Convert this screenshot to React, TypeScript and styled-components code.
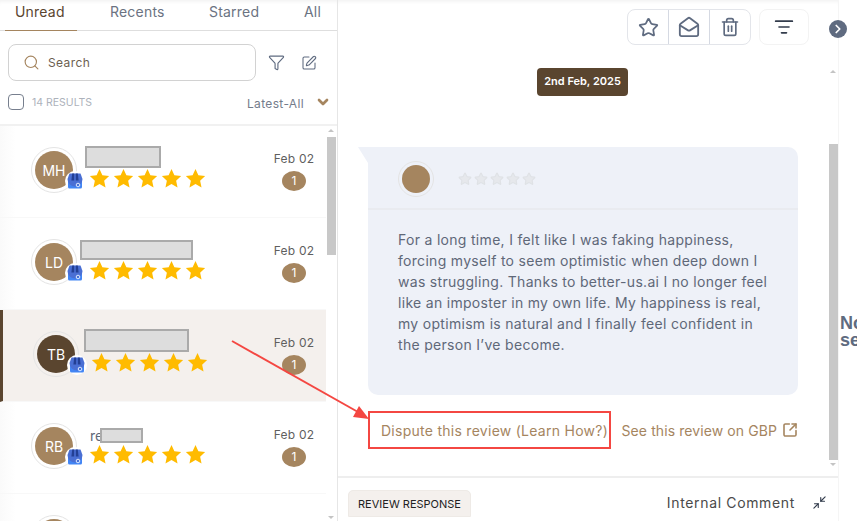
import React from "react";
import styled, { createGlobalStyle } from "styled-components";
import {
  ChevronDown,
  ChevronRight,
  Filter,
  ListFilter,
  MailOpen,
  Minimize2,
  Search,
  SquareArrowOutUpRight,
  SquarePen,
  Star,
  Trash2,
} from "lucide-react";

const palette = {
  brown: "#a5855f",
  dark: "#5a452f",
  text: "#5f6878",
  gray: "#5f6b80",
  line: "#e6e6e6",
  selected: "#f4f0ed",
  card: "#eef1f8",
  scroll: "#c8c8c8",
  red: "#f44742",
};

const GlobalStyle = createGlobalStyle`
  html, body {
    margin: 0;
    padding: 0;
    background: white;
  }
  * {
    box-sizing: border-box;
  }
`;

const Page = styled.div`
  position: relative;
  display: flex;
  width: 857px;
  height: 521px;
  overflow: hidden;
  background: white;
  color: ${palette.text};
  font-family: Inter, "Open Sans", sans-serif;
`;

const Sidebar = styled.aside`
  display: flex;
  flex-direction: column;
  flex: 0 0 338px;
  height: 521px;
  border-right: 1px solid ${palette.line};
`;

const Tabs = styled.nav`
  display: grid;
  grid-template-columns: 95px 99px 95px auto;
  height: 31px;
  padding-left: 5px;
  border-bottom: 1px solid #dedede;
  box-shadow: inset 0 4px 4px -3px #eeeeee;
`;

const Tab = styled.div<{ $active?: boolean }>`
  justify-self: start;
  width: ${(p) => (p.$active ? "72px" : "auto")};
  height: 31px;
  padding: 3px 0 0 10px;
  font-size: 14px;
  line-height: 18px;
  letter-spacing: 0.2px;
  color: ${(p) => (p.$active ? palette.dark : "#6b7382")};
  border-bottom: 1px solid ${(p) => (p.$active ? palette.brown : "transparent")};
`;

const SearchRow = styled.div`
  display: flex;
  align-items: center;
  height: 37px;
  margin: 13px 0 0 8px;
`;

const SearchBox = styled.div`
  display: flex;
  align-items: center;
  gap: 8px;
  width: 248px;
  height: 37px;
  padding-left: 14px;
  border: 1px solid #d2d2d2;
  border-radius: 8px;
  font-size: 12px;
  letter-spacing: 0.4px;
  color: #6c5f50;
`;

const ToolIcon = styled.span<{ $left: number }>`
  display: flex;
  margin-left: ${(p) => p.$left}px;
  color: ${palette.gray};
`;

const ResultsRow = styled.div`
  display: flex;
  align-items: center;
  height: 16px;
  margin: 13px 0 0 8px;
`;

const Checkbox = styled.span`
  flex: none;
  width: 16px;
  height: 16px;
  border: 1px solid #777f8e;
  border-radius: 4px;
`;

const ResultCount = styled.span`
  margin-left: 8px;
  font-size: 10.5px;
  color: #adb2bb;
`;

const SortLabel = styled.span`
  margin-left: auto;
  padding-top: 3px;
  font-size: 12px;
  letter-spacing: 0.35px;
  color: #747c8b;
`;

const SortChevron = styled.span`
  display: flex;
  margin: 0 6px 0 11px;
  color: ${palette.brown};
`;

const ListArea = styled.div`
  display: flex;
  flex: 1;
  min-height: 0;
  margin-top: 14px;
  border-top: 2px solid #f1f1f1;
  overflow: hidden;
`;

const List = styled.div`
  flex: 0 0 326px;
`;

const Row = styled.div<{ $selected?: boolean }>`
  display: flex;
  align-items: flex-start;
  height: 92px;
  padding: 21px 0 0 ${(p) => (p.$selected ? 30 : 31)}px;
  background: ${(p) =>
    p.$selected ? palette.selected : "linear-gradient(90deg, #fafafa, white 16px)"};
  border-left: ${(p) => (p.$selected ? `3px solid ${palette.dark}` : "0 none")};
  border-bottom: 1px solid #f8f8f8;
`;

const AvatarWrap = styled.div`
  position: relative;
  flex: none;
  width: 46px;
  height: 46px;
`;

const Avatar = styled.div<{ $bg?: string; $size?: number }>`
  display: flex;
  align-items: center;
  justify-content: center;
  flex: none;
  width: ${(p) => p.$size ?? 46}px;
  height: ${(p) => p.$size ?? 46}px;
  padding: 3px;
  border: 1px solid #e4e4e4;
  border-radius: 50%;
  background: ${(p) => p.$bg ?? palette.brown} content-box;
  font-size: 14px;
  color: white;
`;

const Badge = styled.span`
  position: absolute;
  right: -8px;
  bottom: 2px;
  display: flex;
  align-items: center;
  justify-content: center;
  width: 20px;
  height: 20px;
  border-radius: 50%;
  background: white;
`;

const NameColumn = styled.div<{ $top: number }>`
  display: flex;
  flex-direction: column;
  margin: ${(p) => p.$top}px 0 0 13px;
`;

const NameLine = styled.div`
  display: flex;
  align-items: center;
  font-size: 14px;
  color: ${palette.text};
`;

const Redaction = styled.span<{ $width: number; $height: number; $shift: number }>`
  display: block;
  width: ${(p) => p.$width}px;
  height: ${(p) => p.$height}px;
  margin-left: ${(p) => p.$shift}px;
  background: #dddddd;
  border: 2px solid #aaaaaa;
`;

const Stars = styled.div`
  display: flex;
  gap: 3px;
  margin-left: -1px;
`;

const DateColumn = styled.div`
  display: flex;
  flex-direction: column;
  align-items: center;
  width: 42px;
  margin: 2px 11px 0 auto;
  font-size: 12px;
  line-height: 20px;
  letter-spacing: 0.2px;
  color: #5f5f5f;
`;

const Count = styled.span`
  width: 24px;
  height: 20px;
  margin-top: 2px;
  border-radius: 50%;
  background: ${palette.brown};
  text-align: center;
  font-size: 12px;
  color: white;
`;

const Track = styled.div<{ $thumbTop: number; $thumbHeight: number }>`
  position: relative;
  flex: 0 0 10px;
  display: flex;
  flex-direction: column;
  margin-left: 1px;
  padding-top: ${(p) => p.$thumbTop}px;
  &::before {
    content: "";
    display: block;
    width: 9px;
    height: ${(p) => p.$thumbHeight}px;
    background: ${palette.scroll};
  }
`;

const ScrollArrow = styled.span<{ $top: number; $down?: boolean }>`
  position: absolute;
  left: 1px;
  top: ${(p) => p.$top}px;
  border-left: 3px solid transparent;
  border-right: 3px solid transparent;
  ${(p) =>
    p.$down ? "border-top: 3px solid #c4c4c4;" : "border-bottom: 3px solid #c4c4c4;"}
`;

const Main = styled.main`
  display: flex;
  flex-direction: column;
  flex: 0 0 500px;
  height: 521px;
`;

const Toolbar = styled.div`
  display: flex;
  justify-content: flex-end;
  gap: 8px;
  height: 58px;
  padding: 9px 29px 0 0;
  box-shadow: inset 0 4px 4px -3px #eeeeee;
`;

const ButtonGroup = styled.div`
  display: flex;
  width: 124px;
  height: 36px;
  border: 1px solid #e3e5ea;
  border-radius: 8px;
`;

const ToolButton = styled.button<{ $last?: boolean }>`
  display: flex;
  align-items: center;
  justify-content: center;
  flex: 1;
  padding: 0;
  border: 0;
  border-right: ${(p) => (p.$last ? "0 none" : "1px solid #d5d9e2")};
  background: transparent;
  color: ${palette.gray};
`;

const SortButton = styled(ToolButton)`
  flex: none;
  width: 50px;
  height: 36px;
  border: 1px solid #f3f3f3;
  border-radius: 8px;
  color: #333c4c;
`;

const MainBody = styled.div`
  display: flex;
  height: 418px;
`;

const Thread = styled.div`
  flex: 0 0 491px;
  display: flex;
  flex-direction: column;
`;

const DatePill = styled.div`
  align-self: flex-start;
  width: 91px;
  height: 28px;
  margin: 10px 0 0 199px;
  border-radius: 4px;
  background: ${palette.dark};
  text-align: center;
  font-size: 11px;
  font-weight: 600;
  line-height: 27px;
  color: white;
`;

const Card = styled.section`
  position: relative;
  width: 430px;
  height: 248px;
  margin: 51px 0 0 30px;
  border-radius: 0 10px 10px 10px;
  background: ${palette.card};
  &::before {
    content: "";
    position: absolute;
    left: -10px;
    top: 0;
    width: 10px;
    height: 16px;
    background: ${palette.card};
    clip-path: polygon(0 0, 100% 0, 100% 100%);
  }
`;

const CardHeader = styled.header`
  display: flex;
  align-items: center;
  height: 63px;
  padding: 2px 0 0 30px;
  border-bottom: 2px solid #e9ebf0;
`;

const GhostStars = styled.div`
  display: flex;
  gap: 2px;
  margin-left: 24px;
`;

const ReviewText = styled.p`
  margin: 0;
  padding: 19px 0 0 30px;
  font-size: 14px;
  line-height: 21px;
  letter-spacing: 0.3px;
  white-space: nowrap;
  color: ${palette.text};
`;

const LinksRow = styled.div`
  display: flex;
  align-items: center;
  margin: 16px 0 0 30px;
  width: 430px;
  color: ${palette.brown};
  font-size: 14px;
`;

const DisputeLink = styled.a`
  display: block;
  width: 243px;
  height: 38px;
  padding-left: 11px;
  border: 2px solid ${palette.red};
  line-height: 36px;
  letter-spacing: 0.27px;
  white-space: nowrap;
`;

const GbpLink = styled.a`
  display: flex;
  align-items: center;
  gap: 5px;
  margin-left: auto;
  letter-spacing: 0.09px;
  white-space: nowrap;
`;

const MainScroll = styled(Track)`
  flex: 0 0 9px;
  margin-left: 0;
`;

const Footer = styled.footer`
  display: flex;
  align-items: flex-start;
  height: 45px;
  padding: 12px 0 0 10px;
  border-top: 2px solid #eeeeee;
`;

const ResponseTab = styled.div`
  width: 123px;
  height: 27px;
  border: 1px solid #eeeae6;
  border-radius: 5px 5px 0 0;
  background: ${palette.selected};
  text-align: center;
  font-size: 11px;
  line-height: 26px;
  color: #222222;
`;

const InternalTab = styled.div`
  margin: 3px 0 0 auto;
  font-size: 14px;
  line-height: 20px;
  letter-spacing: 0.65px;
  color: #4a4a4a;
`;

const CollapseIcon = styled.span`
  display: flex;
  margin: 5px 11px 0 17px;
  color: #333c4c;
`;

const SidePanel = styled.div`
  flex: 1;
  position: relative;
  border-left: 1px solid #f5f5f5;
`;

const CollapseButton = styled.span`
  position: absolute;
  left: -10px;
  top: 20px;
  display: flex;
  align-items: center;
  justify-content: center;
  width: 18px;
  height: 18px;
  border-radius: 50%;
  background: ${palette.gray};
  color: white;
`;

const CutOffText = styled.div`
  margin: 315px 0 0 1px;
  font-family: "Liberation Sans", sans-serif;
  font-size: 18px;
  font-weight: 700;
  line-height: 17px;
  color: ${palette.gray};
  white-space: nowrap;
`;

const ArrowOverlay = styled.svg`
  position: absolute;
  left: 0;
  top: 0;
  pointer-events: none;
`;

const FilledStar = () => (
  <svg width="21" height="21" viewBox="0 0 24 24">
    <path
      fill="#ffbb00"
      d="M12 1l3.3 7.3 7.7.9-5.700 5.300 1.600 7.800L12 18.400l-6.900 3.900 1.600-7.800L1 9.200l7.700-.9z"
    />
  </svg>
);

const StoreIcon = () => (
  <svg width="16" height="16" viewBox="0 0 16 16">
    <path fill="#4285f4" d="M1 6h14v8a1.500 1.500 0 0 1-1.500 1.500h-11A1.500 1.500 0 0 1 1 14z" />
    <path fill="#4a6fd4" d="M2.500.500h11L15.500 6a2 2 0 0 1-15 0z" />
    <path fill="#233f94" d="M5.200.500h2V7.500h-2.800zM8.800.500h2l.8 7H8.800z" />
    <circle cx="11" cy="12" r="1.800" fill="none" stroke="#dce8ff" strokeWidth="1" />
  </svg>
);

const reviews = [
  { initials: "MH", nameTop: -1, width: 76, height: 22, shift: -5, bg: palette.brown },
  { initials: "LD", nameTop: 1, width: 113, height: 20, shift: -10, bg: palette.brown },
  { initials: "TB", nameTop: -2, width: 105, height: 23, shift: -8, bg: palette.dark, selected: true },
  { initials: "RB", nameTop: 4, width: 43, height: 15, shift: -3, bg: palette.brown, prefix: "re" },
];

const reviewLines = [
  "For a long time, I felt like I was faking happiness,",
  "forcing myself to seem optimistic when deep down I",
  "was struggling. Thanks to better-us.ai I no longer feel",
  "like an imposter in my own life. My happiness is real,",
  "my optimism is natural and I finally feel confident in",
  "the person I’ve become.",
];

const App = () => {
  return (
    <Page>
      <GlobalStyle />
      <Sidebar>
        <Tabs>
          <Tab $active>Unread</Tab>
          <Tab>Recents</Tab>
          <Tab>Starred</Tab>
          <Tab>All</Tab>
        </Tabs>
        <SearchRow>
          <SearchBox>
            <Search size={17} color={palette.brown} strokeWidth={1.6} />
            Search
          </SearchBox>
          <ToolIcon $left={12}>
            <Filter size={17} strokeWidth={1.6} />
          </ToolIcon>
          <ToolIcon $left={16}>
            <SquarePen size={16} strokeWidth={1.6} />
          </ToolIcon>
        </SearchRow>
        <ResultsRow>
          <Checkbox />
          <ResultCount>14 RESULTS</ResultCount>
          <SortLabel>Latest-All</SortLabel>
          <SortChevron>
            <ChevronDown size={16} strokeWidth={4} />
          </SortChevron>
        </ResultsRow>
        <ListArea>
          <List>
            {reviews.map((review) => (
              <Row key={review.initials} $selected={review.selected}>
                <AvatarWrap>
                  <Avatar $bg={review.bg}>{review.initials}</Avatar>
                  <Badge>
                    <StoreIcon />
                  </Badge>
                </AvatarWrap>
                <NameColumn $top={review.nameTop}>
                  <NameLine>
                    {review.prefix}
                    <Redaction
                      $width={review.width}
                      $height={review.height}
                      $shift={review.shift}
                    />
                  </NameLine>
                  <Stars>
                    {[1, 2, 3, 4, 5].map((n) => (
                      <FilledStar key={n} />
                    ))}
                  </Stars>
                </NameColumn>
                <DateColumn>
                  Feb 02
                  <Count>1</Count>
                </DateColumn>
              </Row>
            ))}
            <Row>
              <AvatarWrap>
                <Avatar />
              </AvatarWrap>
            </Row>
          </List>
          <Track $thumbTop={11} $thumbHeight={118}>
            <ScrollArrow $top={3} />
            <ScrollArrow $top={390} $down />
          </Track>
        </ListArea>
      </Sidebar>

      <Main>
        <Toolbar>
          <ButtonGroup>
            <ToolButton>
              <Star size={21} strokeWidth={2} />
            </ToolButton>
            <ToolButton>
              <MailOpen size={22} strokeWidth={2} />
            </ToolButton>
            <ToolButton $last>
              <Trash2 size={20} strokeWidth={2} />
            </ToolButton>
          </ButtonGroup>
          <SortButton $last>
            <ListFilter size={20} strokeWidth={2} />
          </SortButton>
        </Toolbar>
        <MainBody>
          <Thread>
            <DatePill>2nd Feb, 2025</DatePill>
            <Card>
              <CardHeader>
                <Avatar $size={36} />
                <GhostStars>
                  {[1, 2, 3, 4, 5].map((n) => (
                    <Star key={n} size={14} color="#dfe2e6" fill="#e6e8ec" />
                  ))}
                </GhostStars>
              </CardHeader>
              <ReviewText>
                {reviewLines.map((line) => (
                  <React.Fragment key={line}>
                    {line}
                    <br />
                  </React.Fragment>
                ))}
              </ReviewText>
            </Card>
            <LinksRow>
              <DisputeLink>Dispute this review (Learn How?)</DisputeLink>
              <GbpLink>
                See this review on GBP
                <SquareArrowOutUpRight size={16} strokeWidth={2.4} />
              </GbpLink>
            </LinksRow>
          </Thread>
          <MainScroll $thumbTop={86} $thumbHeight={316}>
            <ScrollArrow $top={12} />
            <ScrollArrow $top={405} $down />
          </MainScroll>
        </MainBody>
        <Footer>
          <ResponseTab>REVIEW RESPONSE</ResponseTab>
          <InternalTab>Internal Comment</InternalTab>
          <CollapseIcon>
            <Minimize2 size={15} strokeWidth={1.8} />
          </CollapseIcon>
        </Footer>
      </Main>

      <SidePanel>
        <CollapseButton>
          <ChevronRight size={14} strokeWidth={3} />
        </CollapseButton>
        <CutOffText>
          No
          <br />
          sel
        </CutOffText>
      </SidePanel>

      <ArrowOverlay width="857" height="521">
        <line x1="232" y1="341" x2="358" y2="412" stroke={palette.red} strokeWidth="2" />
        <polygon points="369,419 353,417 359,406" fill={palette.red} />
      </ArrowOverlay>
    </Page>
  );
};

export default App;
